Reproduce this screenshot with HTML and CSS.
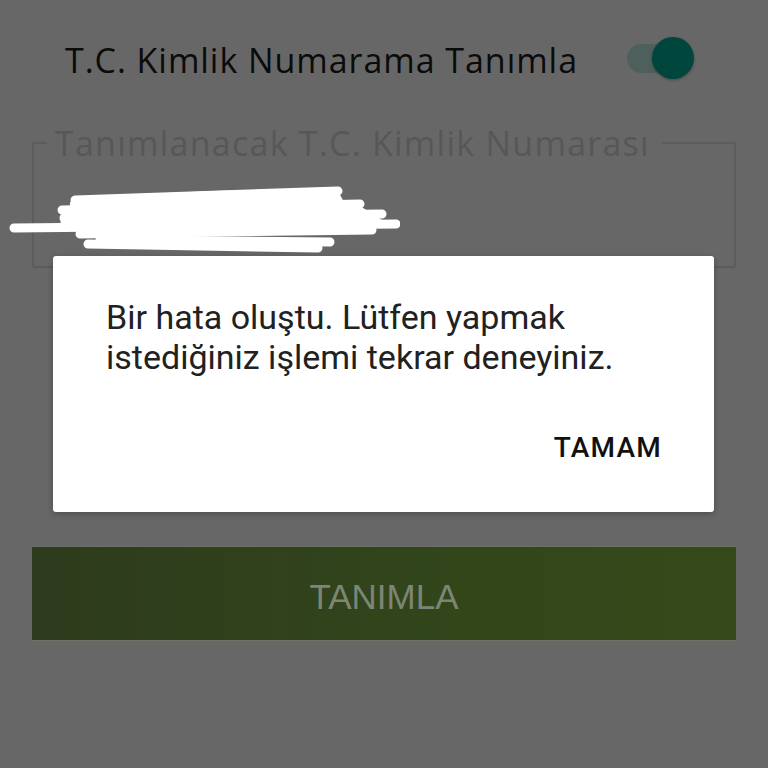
FILE: index.html
```html
<!DOCTYPE html>
<html lang="tr">
<head>
<meta charset="utf-8">
<link rel="stylesheet" href="styles.css">
</head>
<body>
<div class="screen">
  <div class="row">
    <span class="title">T.C. Kimlik Numarama Tanımla</span>
    <span class="toggle"><span class="track"></span><span class="thumb"></span></span>
  </div>
  <fieldset class="field">
    <legend class="label">Tanımlanacak T.C. Kimlik Numarası</legend>
  </fieldset>
  <svg class="scribble" width="400" height="70" viewBox="0 0 400 70">
    <g fill="none" stroke="#fff" stroke-linecap="round" stroke-width="9">
      <path d="M75 16 L338 7"/>
      <path d="M62 26 L360 20"/>
      <path d="M64 34 L382 30"/>
      <path d="M14 44 L396 40"/>
      <path d="M80 50 L372 46"/>
      <path d="M88 60 L318 64"/>
      <path d="M100 56 L330 58"/>
      <path d="M120 22 L300 26"/>
      <path d="M90 40 L330 36"/>
    </g>
    <g fill="#fff">
      <path d="M70 18 C150 6 300 4 338 7 L345 20 C280 24 160 28 70 28 Z"/>
      <path d="M62 28 L360 22 L382 36 L330 50 L100 54 L60 42 Z"/>
    </g>
  </svg>
  <button class="btn">TANIMLA</button>
</div>
<div class="dialog">
  <p class="msg">Bir hata oluştu. Lütfen yapmak istediğiniz işlemi tekrar deneyiniz.</p>
  <div class="actions"><span class="ok">TAMAM</span></div>
</div>
</body>
</html>
```
FILE: styles.css
```css
html, body {
  margin: 0;
  padding: 0;
  background: #676767;
  width: 768px;
  height: 768px;
  overflow: hidden;
  position: relative;
}
.screen {
  display: flex;
  flex-direction: column;
  padding: 37px 32px 0 32px;
  position: relative;
}
.row {
  display: flex;
  align-items: center;
  justify-content: space-between;
  padding-left: 33px;
  padding-right: 42px;
  height: 42px;
}
.title {
  font-family: "Open Sans", Lato, sans-serif;
  font-size: 34px;
  color: #0b0b0b;
  letter-spacing: 0.95px;
  padding-top: 4px;
}
.toggle {
  position: relative;
  width: 67px;
  height: 42px;
}
.track {
  position: absolute;
  left: 0;
  top: 7px;
  width: 58px;
  height: 29px;
  border-radius: 15px;
  background: #4e605c;
}
.thumb {
  position: absolute;
  right: 0;
  top: 0;
  width: 42px;
  height: 42px;
  border-radius: 50%;
  background: #00463c;
  box-shadow: 0 1px 3px rgba(0,0,0,0.3);
}
.field {
  margin: 47px 0 0 0;
  border: 2px solid #5c5c5c;
  border-radius: 3px;
  padding: 0 22px;
  height: 142px;
  box-sizing: border-box;
  min-width: 0;
}
.label {
  font-family: "Open Sans", Lato, sans-serif;
  font-size: 34px;
  color: #575757;
  padding: 0 12px 0 8px;
  margin-left: -9px;
  line-height: 34px;
  letter-spacing: 1.25px;
}
.scribble {
  position: absolute;
  left: 0;
  top: 184px;
}
.btn {
  margin-top: 278px;
  height: 95px;
  border: none;
  border-top: 1px solid #6d7166;
  border-bottom: 1px solid #6d7166;
  background: linear-gradient(90deg, #2e3b1d 0%, #32461a 60%, #35491a 100%);
  font-family: "Liberation Sans", Arial, sans-serif;
  font-size: 35px;
  color: #7c8576;
  padding: 7px 0 0 0;
}
.dialog {
  position: absolute;
  left: 53px;
  top: 256px;
  width: 661px;
  height: 256px;
  background: #fff;
  border-radius: 3px;
  box-sizing: border-box;
  padding: 0 52px 0 53px;
  box-shadow: 0 2px 6px rgba(0,0,0,0.25);
  display: flex;
  flex-direction: column;
}
.msg {
  margin: 41px 0 0 0;
  max-width: 545px;
  font-family: Roboto, "Noto Sans", sans-serif;
  font-size: 34px;
  line-height: 40px;
  color: #212121;
}
.actions {
  display: flex;
  justify-content: flex-end;
  margin-top: 54px;
}
.ok {
  font-family: Roboto, sans-serif;
  font-weight: 500;
  font-size: 28px;
  letter-spacing: 1.2px;
  color: #111;
}
```
